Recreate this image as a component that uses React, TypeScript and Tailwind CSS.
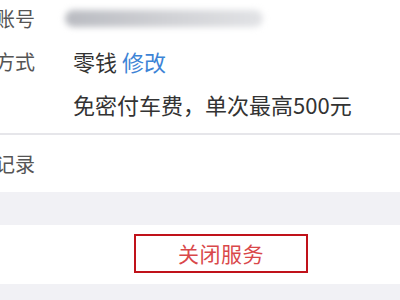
import React from 'react';

const font = { fontFamily: '"Noto Sans CJK SC", "Noto Sans", sans-serif' };

const Label = ({ text }: { text: string }) => (
  <div className="w-[35px] shrink-0 flex justify-end whitespace-nowrap text-[20px] text-[#555]">
    {text}
  </div>
);

const App = () => {
  return (
    <div className="w-[400px] h-[300px] overflow-hidden bg-[#f1f1f5]" style={font}>
      {/* account info */}
      <div className="bg-white pb-[7px]">
        <div className="-mt-[3px] leading-[43px]">
          <div className="flex">
            <Label text="支付账号" />
            <div className="ml-[38px] flex items-center">
              <div className="-ml-[8px] w-[198px] h-[17px] rounded-full bg-gradient-to-r from-[#b9bbc1] via-[#cfd0d4] to-[#e2e3e6] blur-[3px]" />
            </div>
          </div>
          <div className="flex">
            <Label text="支付方式" />
            <div className="ml-[38px] text-[22px] text-[#333]">
              零钱 <span className="text-[#3d84d6]">修改</span>
            </div>
          </div>
          <div className="flex">
            <div className="w-[35px] shrink-0" />
            <div className="ml-[38px] text-[22px] text-[#333] whitespace-nowrap">
              免密付车费，单次最高500元
            </div>
          </div>
        </div>
      </div>
      <div className="h-[2px] bg-[#e6e6ea]" />

      {/* record row */}
      <div className="bg-white h-[57px] flex items-center">
        <Label text="扣费记录" />
      </div>

      <div className="h-[33px]" />

      {/* close service */}
      <div className="bg-white h-[59px] pt-[9px] pl-[134px]">
        <button className="w-[174px] h-[39px] border-2 border-[#c0121a] flex items-center justify-center text-[21px] text-[#d9484a] tracking-[0.5px]">
          关闭服务
        </button>
      </div>
    </div>
  );
};

export default App;
